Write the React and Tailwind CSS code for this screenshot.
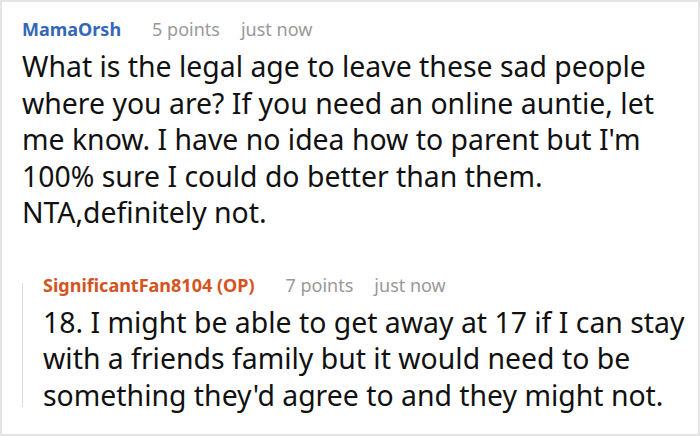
export default function App() {
  return (
    <div className="w-[700px] h-[436px] bg-white border-2 border-[#e4e4e4] overflow-hidden" style={{ fontFamily: '"Noto Sans", sans-serif' }}>
      <div className="pl-[20px] pt-[14px]">
        <div className="flex items-center text-[18px] leading-[26px] whitespace-nowrap">
          <span className="font-bold text-[#3567b8]">MamaOrsh</span>
          <span className="ml-[31px] text-[#999999]">5 points</span>
          <span className="ml-[21px] text-[#999999]">just now</span>
        </div>
        <p className="text-[28.4px] leading-[36.5px] text-[#111] mt-[6px] whitespace-nowrap">
          What is the legal age to leave these sad people<br />
          where you are? If you need an online auntie, let<br />
          me know. I have no idea how to parent but I'm<br />
          100% sure I could do better than them.<br />
          NTA,definitely not.
        </p>
        <div className="mt-[41px] flex">
          <div className="mt-[11px] mb-[6px] w-px bg-[#dddddd] shrink-0" />
          <div className="pl-[20px]">
            <div className="flex items-center text-[18px] leading-[26px] whitespace-nowrap">
              <span className="font-bold text-[#d4541f]">SignificantFan8104 (OP)</span>
              <span className="ml-[31px] text-[#999999]">7 points</span>
              <span className="ml-[21px] text-[#999999]">just now</span>
            </div>
            <p className="text-[28.4px] leading-[36.5px] text-[#111] mt-[6px] whitespace-nowrap">
              18. I might be able to get away at 17 if I can stay<br />
              with a friends family but it would need to be<br />
              something they'd agree to and they might not.
            </p>
          </div>
        </div>
      </div>
    </div>
  );
}
